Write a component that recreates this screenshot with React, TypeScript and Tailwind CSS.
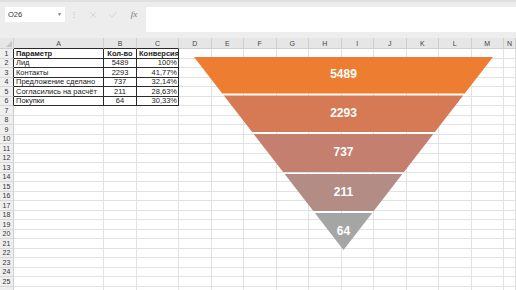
import React from 'react';
import { X, Check } from 'lucide-react';

const letters = ['A', 'B', 'C', 'D', 'E', 'F', 'G', 'H', 'I', 'J', 'K', 'L', 'M', 'N'];

const data: [string, string, string][] = [
  ['Параметр', 'Кол-во', 'Конверсия'],
  ['Лид', '5489', '100%'],
  ['Контакты', '2293', '41,77%'],
  ['Предложение сделано', '737', '32,14%'],
  ['Согласились на расчёт', '211', '28,63%'],
  ['Покупки', '64', '30,33%'],
];

const bands = [
  { value: '5489', color: '#ED7D31', top: 57, bottom: 93.5 },
  { value: '2293', color: '#D67A55', top: 95.5, bottom: 132 },
  { value: '737', color: '#C47F6E', top: 134, bottom: 172 },
  { value: '211', color: '#B38C86', top: 174, bottom: 211 },
  { value: '64', color: '#A5A5A5', top: 213, bottom: 250 },
];

// funnel edges: left (194,57) -> (343.5,250), right (493,57) -> (343.5,250)
const leftX = (y: number) => 194 + ((y - 57) * 149.5) / 193;
const rightX = (y: number) => 493 - ((y - 57) * 149.5) / 193;

const Funnel = () => (
  <svg className="absolute left-0 top-0 pointer-events-none" width={516} height={290}>
    {bands.map((b) => {
      const pts =
        b.bottom >= 250
          ? `${leftX(b.top)},${b.top} ${rightX(b.top)},${b.top} 343.5,250`
          : `${leftX(b.top)},${b.top} ${rightX(b.top)},${b.top} ${rightX(b.bottom)},${b.bottom} ${leftX(b.bottom)},${b.bottom}`;
      const cy = b.bottom >= 250 ? b.top + 18 : (b.top + b.bottom) / 2 - 1;
      return (
        <g key={b.value}>
          <polygon points={pts} fill={b.color} />
          <text
            x={343.5}
            y={cy}
            textAnchor="middle"
            dominantBaseline="central"
            fill="#fff"
            fontSize={12}
            fontWeight={700}
            fontFamily="'Liberation Sans', Arial, sans-serif"
          >
            {b.value}
          </text>
        </g>
      );
    })}
  </svg>
);

export default function App() {
  const rows = Array.from({ length: 27 }, (_, i) => i + 1);

  return (
    <div className="relative w-[516px] h-[290px] overflow-hidden bg-white font-['Liberation_Sans',Arial,sans-serif] text-[#222]">
      {/* toolbar */}
      <div className="h-[38px] bg-[#ededed] border-t-2 border-[#e0e0e0] flex items-start pt-[5px]">
        <div className="ml-[5px] w-[60px] h-[15px] bg-white flex items-center justify-between px-[3px] text-[7.5px] text-[#333]">
          <span>O26</span>
          <span className="text-[5px] text-[#777]">▼</span>
        </div>
        <div className="w-[18px] h-[15px] flex items-center justify-center text-[8px] text-[#bdbdbd]">⋮</div>
        <div className="w-[20px] h-[15px] flex items-center justify-center text-[#b8b8b8]">
          <X size={10} strokeWidth={1.2} />
        </div>
        <div className="w-[20px] h-[15px] flex items-center justify-center text-[#b8b8b8]">
          <Check size={10} strokeWidth={1.2} />
        </div>
        <div className="w-[22px] h-[15px] flex items-center justify-center text-[9px] italic font-['Liberation_Serif',serif] text-[#777]">
          fx
        </div>
        <div className="ml-[1px] flex-1 h-[25px] bg-white" />
      </div>

      {/* sheet */}
      <div className="grid grid-cols-[14px_90px_33px_42px_repeat(10,32.5px)_1fr] text-[7.5px] leading-none">
        <div className="h-[11px] bg-[#e6e6e6] border-r border-b border-[#cfcfcf] flex items-end justify-end p-[1px]">
          <svg width={6} height={6}>
            <polygon points="6,0 6,6 0,6" fill="#c4c4c4" />
          </svg>
        </div>
        {letters.map((l, c) => (
          <div
            key={l}
            className={`h-[11px] bg-[#e6e6e6] border-r border-[#cfcfcf] flex items-center justify-center text-[7px] text-[#444] border-b ${
              c <= 2 ? 'border-b-[#2b2b2b]' : 'border-b-[#cfcfcf]'
            }`}
          >
            {l}
          </div>
        ))}

        {rows.map((r) => (
          <React.Fragment key={r}>
            <div
              className={`h-[9.5px] bg-[#efefef] border-b border-[#d8d8d8] border-r flex items-center justify-center text-[7px] text-[#333] ${
                r <= 6 ? 'border-r-[#2b2b2b]' : 'border-r-[#cfcfcf]'
              }`}
            >
              {r <= 25 ? r : ''}
            </div>
            {letters.map((l, c) => {
              const inTable = r <= 6 && c <= 2;
              const text = inTable ? data[r - 1][c] : '';
              const align = c === 0 ? 'justify-start pl-[2px]' : c === 1 ? 'justify-center' : 'justify-end pr-[1px]';
              return (
                <div
                  key={l}
                  className={`h-[9.5px] border-r border-b flex items-center whitespace-nowrap ${align} ${
                    inTable ? 'border-[#2b2b2b]' : 'border-[#e2e2e2]'
                  } ${r === 1 && inTable ? 'font-bold' : ''} ${r === 1 && c === 2 ? 'justify-start pl-[2px]' : ''}`}
                >
                  {text}
                </div>
              );
            })}
          </React.Fragment>
        ))}
      </div>

      <Funnel />
    </div>
  );
}
